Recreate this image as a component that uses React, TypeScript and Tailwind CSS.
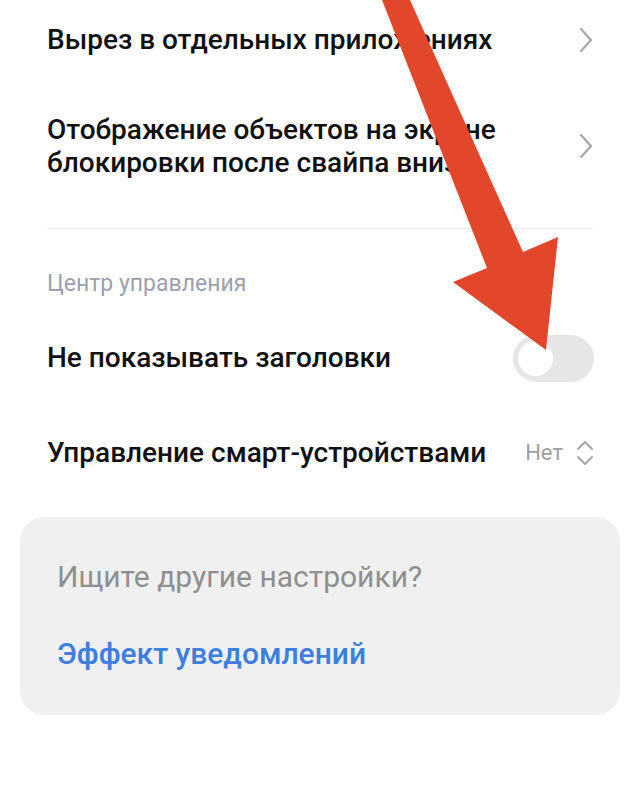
import React from "react";

function Chevron() {
  return (
    <svg width="16" height="26" viewBox="0 0 16 26" className="shrink-0">
      <path d="M3 2 L13 13 L3 24" fill="none" stroke="#a6a6a6" strokeWidth="2.2" strokeLinecap="round" strokeLinejoin="round" />
    </svg>
  );
}

function UpDown() {
  return (
    <svg width="18" height="28" viewBox="0 0 18 28" className="shrink-0">
      <path d="M2 10 L9 3 L16 10" fill="none" stroke="#a6a6a6" strokeWidth="2" strokeLinecap="round" strokeLinejoin="round" />
      <path d="M2 18 L9 25 L16 18" fill="none" stroke="#a6a6a6" strokeWidth="2" strokeLinecap="round" strokeLinejoin="round" />
    </svg>
  );
}

export default function App() {
  return (
    <div
      className="relative w-[640px] h-[785px] bg-white overflow-hidden"
      style={{ fontFamily: "Roboto, 'Noto Sans', sans-serif" }}
    >
      <div className="flex flex-col">
        <div className="h-[80px] flex items-center justify-between pl-[47px] pr-[46px]">
          <span className="text-[28px] leading-[34px] font-medium text-[#111111] whitespace-nowrap">Вырез в отдельных приложениях</span>
          <Chevron />
        </div>
        <div className="h-[132px] flex items-center justify-between pl-[47px] pr-[46px]">
          <span className="text-[28px] leading-[33px] font-medium text-[#111111] whitespace-nowrap">
            Отображение объектов на экране
            <br />
            блокировки после свайпа вниз
          </span>
          <Chevron />
        </div>
        <div className="mt-[16px] mx-[47px] border-t border-[#ebebeb]" />
        <div className="pt-[41px] pb-[20px] pl-[47px]">
          <span className="block text-[23px] leading-[28px] text-[#9ba0ae]">Центр управления</span>
        </div>
        <div className="h-[80px] flex items-center justify-between pl-[47px] pr-[46px]">
          <span className="text-[28px] leading-[34px] font-medium text-[#111111]">Не показывать заголовки</span>
          <div className="w-[81px] h-[47px] rounded-full bg-[#e6e6e6] flex items-center pl-[5px]">
            <div className="w-[35px] h-[35px] rounded-full bg-white" />
          </div>
        </div>
        <div className="h-[110px] flex items-center justify-between pl-[47px] pr-[46px]">
          <span className="text-[28px] leading-[34px] font-medium text-[#111111] whitespace-nowrap">Управление смарт-устройствами</span>
          <div className="flex items-center gap-[13px]">
            <span className="text-[22px] leading-[28px] text-[#a0a0a0]">Нет</span>
            <UpDown />
          </div>
        </div>
        <div className="mt-[9px] mx-[20px] h-[198px] rounded-[24px] bg-[#f0f0f0] flex flex-col px-[37px]">
          <span className="mt-[42px] text-[30px] leading-[36px] text-[#8f8f8f]">Ищите другие настройки?</span>
          <span className="mt-[41px] text-[30px] leading-[36px] font-medium text-[#3d7fe0]">Эффект уведомлений</span>
        </div>
      </div>
      <svg
        className="absolute inset-0 pointer-events-none"
        width="640"
        height="785"
        viewBox="0 0 640 785"
      >
        <polygon
          points="382,0 410,0 523,252 558,237 546,350 453,282 487,268"
          fill="#e2472b"
        />
      </svg>
    </div>
  );
}
